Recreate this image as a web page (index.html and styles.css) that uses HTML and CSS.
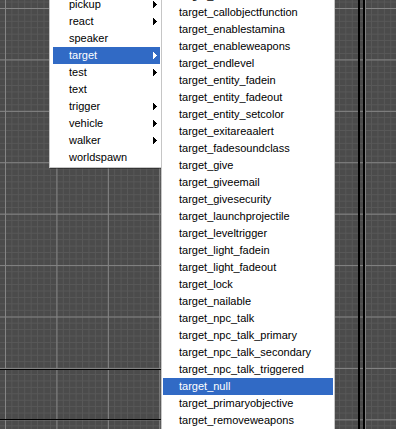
FILE: index.html
```html
<!DOCTYPE html>
<html>
<head>
<meta charset="utf-8">
<link rel="stylesheet" href="styles.css">
</head>
<body>
<div class="canvas">
  <ul class="menu menu-parent">
    <li class="item has-sub"><span>path</span><svg class="arrow" width="4" height="7" viewBox="0 0 4 7"><path d="M0 0h1v7H0zM1 1h1v5H1zM2 2h1v3H2zM3 3h1v1H3z"/></svg></li>
    <li class="item has-sub"><span>pickup</span><svg class="arrow" width="4" height="7" viewBox="0 0 4 7"><path d="M0 0h1v7H0zM1 1h1v5H1zM2 2h1v3H2zM3 3h1v1H3z"/></svg></li>
    <li class="item has-sub"><span>react</span><svg class="arrow" width="4" height="7" viewBox="0 0 4 7"><path d="M0 0h1v7H0zM1 1h1v5H1zM2 2h1v3H2zM3 3h1v1H3z"/></svg></li>
    <li class="item"><span>speaker</span></li>
    <li class="item has-sub active"><span>target</span><svg class="arrow" width="4" height="7" viewBox="0 0 4 7"><path d="M0 0h1v7H0zM1 1h1v5H1zM2 2h1v3H2zM3 3h1v1H3z"/></svg></li>
    <li class="item has-sub"><span>test</span><svg class="arrow" width="4" height="7" viewBox="0 0 4 7"><path d="M0 0h1v7H0zM1 1h1v5H1zM2 2h1v3H2zM3 3h1v1H3z"/></svg></li>
    <li class="item"><span>text</span></li>
    <li class="item has-sub"><span>trigger</span><svg class="arrow" width="4" height="7" viewBox="0 0 4 7"><path d="M0 0h1v7H0zM1 1h1v5H1zM2 2h1v3H2zM3 3h1v1H3z"/></svg></li>
    <li class="item has-sub"><span>vehicle</span><svg class="arrow" width="4" height="7" viewBox="0 0 4 7"><path d="M0 0h1v7H0zM1 1h1v5H1zM2 2h1v3H2zM3 3h1v1H3z"/></svg></li>
    <li class="item has-sub"><span>walker</span><svg class="arrow" width="4" height="7" viewBox="0 0 4 7"><path d="M0 0h1v7H0zM1 1h1v5H1zM2 2h1v3H2zM3 3h1v1H3z"/></svg></li>
    <li class="item"><span>worldspawn</span></li>
  </ul>
  <ul class="menu menu-sub">
    <li class="item">target_attack</li>
    <li class="item">target_callobjectfunction</li>
    <li class="item">target_enablestamina</li>
    <li class="item">target_enableweapons</li>
    <li class="item">target_endlevel</li>
    <li class="item">target_entity_fadein</li>
    <li class="item">target_entity_fadeout</li>
    <li class="item">target_entity_setcolor</li>
    <li class="item">target_exitareaalert</li>
    <li class="item">target_fadesoundclass</li>
    <li class="item">target_give</li>
    <li class="item">target_giveemail</li>
    <li class="item">target_givesecurity</li>
    <li class="item">target_launchprojectile</li>
    <li class="item">target_leveltrigger</li>
    <li class="item">target_light_fadein</li>
    <li class="item">target_light_fadeout</li>
    <li class="item">target_lock</li>
    <li class="item">target_nailable</li>
    <li class="item">target_npc_talk</li>
    <li class="item">target_npc_talk_primary</li>
    <li class="item">target_npc_talk_secondary</li>
    <li class="item">target_npc_talk_triggered</li>
    <li class="item active">target_null</li>
    <li class="item">target_primaryobjective</li>
    <li class="item">target_removeweapons</li>
    <li class="item">target_secret</li>
  </ul>
</div>
</body>
</html>
```
FILE: styles.css
```css
html, body {
  margin: 0;
  padding: 0;
  width: 396px;
  height: 429px;
  overflow: hidden;
}

.canvas {
  position: relative;
  width: 396px;
  height: 429px;
  overflow: hidden;
  background-color: #4b4b4b;
  background-image:
    linear-gradient(#000, #000),
    linear-gradient(#000, #000),
    linear-gradient(#000, #000),
    linear-gradient(#000, #000),
    linear-gradient(90deg, #858585 1px, transparent 1px),
    linear-gradient(180deg, #858585 1px, transparent 1px),
    linear-gradient(90deg, #585858 1px, transparent 1px),
    linear-gradient(180deg, #585858 1px, transparent 1px);
  background-size:
    162px 1px,
    162px 1px,
    2px 100%,
    2px 100%,
    51.43px 100%,
    100% 51.43px,
    6.43px 100%,
    100% 6.43px;
  background-position:
    0 369px,
    0 419px,
    358px 0,
    363px 0,
    5px 0,
    0 8px,
    5px 0,
    0 8px;
  background-repeat:
    no-repeat,
    no-repeat,
    no-repeat,
    no-repeat,
    repeat,
    repeat,
    repeat,
    repeat;
}

.menu {
  position: absolute;
  margin: 0;
  list-style: none;
  background: #fff;
  border: 1px solid #c6c6c6;
  font-family: "Liberation Sans", Arial, sans-serif;
  font-size: 11px;
  color: #000;
  box-sizing: content-box;
}

.menu-parent {
  left: 49px;
  top: -22px;
  width: 107px;
  padding: 0 1px 1px 3px;
  box-shadow: 1px 1px 0 rgba(0, 0, 0, 0.35);
}

.menu-sub {
  left: 161px;
  top: -14px;
  width: 170px;
  padding: 0 1px;
}

.item {
  display: flex;
  align-items: center;
  height: 17px;
  line-height: 17px;
  padding: 0 3px 0 16px;
  white-space: nowrap;
}

.item .arrow {
  margin-left: auto;
  fill: currentColor;
  display: block;
}

.item.active {
  background: #316ac5;
  color: #fff;
}
```
